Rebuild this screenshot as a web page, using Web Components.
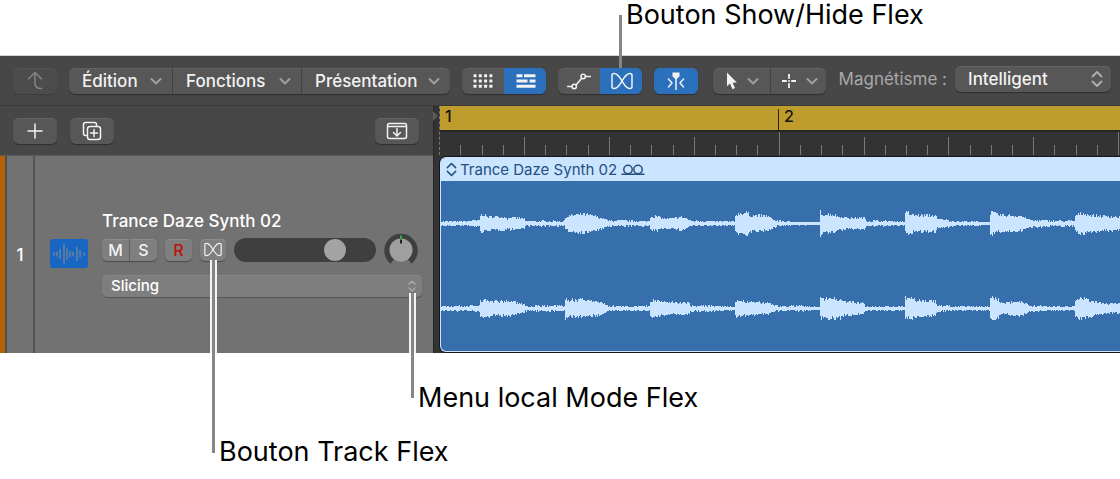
<!DOCTYPE html>
<html lang="fr">
<head>
<meta charset="utf-8">
<title>Boutons Flex</title>
<style>
  body { margin: 0; background: #fff; font-family: Inter, "Liberation Sans", sans-serif; }
</style>
</head>
<body>
<flex-figure></flex-figure>

<script>
const define = (name, html, setup) => customElements.define(name, class extends HTMLElement {
  constructor() {
    super();
    const t = document.createElement('template');
    t.innerHTML = html;
    this.attachShadow({ mode: 'open' }).append(t.content.cloneNode(true));
  }
  connectedCallback() { if (setup) setup(this, this.shadowRoot); }
});

const ICONS = {
  up: [24, 24, '<path d="M5.500 10 L12 3.500 L18.500 10 M12 4 V14.500 Q12 19.500 18.500 19.500"/>'],
  down: [12, 12, '<path d="M1.500 4 L6 8.500 L10.500 4" stroke-width="2"/>'],
  updown: [12, 18, '<path d="M1.500 6.500 L6 2 L10.500 6.500 M1.500 11.500 L6 16 L10.500 11.500" stroke-width="1.800"/>'],
  updownSmall: [8, 12, '<path d="M1 4 L4 1.200 L7 4 M1 8 L4 10.800 L7 8" stroke-width="1.400"/>'],
  plus: [16, 16, '<path d="M8 1 V15 M1 8 H15"/>'],
  copy: [20, 20, '<path d="M4.500 14.500 H3.500 Q1.500 14.500 1.500 12.500 V3.500 Q1.500 1.500 3.500 1.500 H12.500 Q14.500 1.500 14.500 3.500 V4.500"/><rect x="5.500" y="5.500" width="13" height="13" rx="2.500"/><path d="M12 8.500 V15.500 M8.500 12 H15.500"/>'],
  tray: [22, 18, '<rect x="1.500" y="1.500" width="19" height="15" rx="2"/><path d="M2 4.500 H20 M11 6.500 V13.500 M7.500 10.500 L11 14 L14.500 10.500"/>'],
  dots: [20, 14, [0,1,2].map(r => [0,1,2,3].map(c => `<rect x="${c*5.300+.5}" y="${r*5.300+.2}" width="3" height="3" rx=".4" fill="currentColor" stroke="none"/>`).join('')).join('')],
  regions: [20, 14, '<path d="M.500 1.700 H6.500 M8 1.700 H19.500 M.500 7 H11.500 M13.500 7 H19.500 M.500 12.300 H19.500" stroke-width="3" stroke-linecap="butt"/>'],
  curve: [24, 18, '<path d="M.500 14.500 H5 M9.300 12.800 L14.700 6.200 M18.500 4.500 H23.500"/><circle cx="7.200" cy="14.500" r="2.200"/><circle cx="16.200" cy="4.500" r="2.200"/>'],
  flex: [22, 18, '<path d="M1 3.500 Q1 1.500 3 1.500 C7 1.500 9 6 11 9 S15 16.500 19 16.500 Q21 16.500 21 14.500 V3.500 Q21 1.500 19 1.500 C15 1.500 13 6 11 9 S7 16.500 3 16.500 Q1 16.500 1 14.500 Z"/>'],
  catch: [18, 18, '<path d="M5.500 .5 H12.500 V4.500 L9 7.500 L5.500 4.500 Z" fill="currentColor" stroke="none"/><path d="M9 6 V17.500 M1.500 7 L5 11 L1.500 15 M16.500 7 L13 11 L16.500 15"/>'],
  arrow: [12, 18, '<path d="M1 .5 V14.200 L4 11.500 L6.500 17.200 L9 16 L6.600 10.700 L10.800 10.400 Z" fill="currentColor" stroke="none"/>'],
  cross: [16, 16, '<path d="M8 1 V5.800 M8 10.200 V15 M1 8 H5.800 M10.200 8 H15" stroke-width="1.800" stroke-linecap="butt"/><circle cx="8" cy="8" r="1" fill="currentColor" stroke="none"/>'],
  wave: [32, 22, '<path d="M1 10 v2 M4 9 v4 M7 6.500 v9 M11 1.500 v19 M14 6 v10 M17 8.500 v5 M20 9.500 v3 M24 4.500 v13 M27 8 v6 M31 10 v2" stroke-width="1.400"/>'],
  handle: [12, 16, '<path d="M1.500 6 L6 1.500 L10.500 6 M1.500 10 L6 14.500 L10.500 10" stroke-width="1.700"/>'],
  loop: [24, 12, '<circle cx="7" cy="5.500" r="4.200"/><circle cx="17" cy="5.500" r="4.200"/><path d="M1 10.300 H23"/>']
};
define('ui-icon', `<style>
  :host { display: block; flex: none; line-height: 0; }
  svg { display: block; fill: none; stroke: currentColor; stroke-width: 1.5; stroke-linecap: round; stroke-linejoin: round; }
</style><svg aria-hidden="true"></svg>`, (el, root) => {
  const [w, h, body] = ICONS[el.getAttribute('name')];
  const width = +(el.getAttribute('width') || w);
  const svg = root.querySelector('svg');
  svg.setAttribute('viewBox', `0 0 ${w} ${h}`);
  svg.setAttribute('width', width);
  svg.setAttribute('height', Math.round(h * width / w));
  svg.innerHTML = body;
});

/* Rounded frame that joins its buttons into one segmented control. */
define('button-group', `<style>
  :host { display: flex; flex: none; height: 26px; border-radius: 6px; overflow: hidden; background: #575757;
    box-shadow: 0 1px 1px #2e2e2e, inset 0 1px #636363; }
  :host([quiet]) { background: #4c4c4c; box-shadow: 0 1px 1px #3c3c3c, inset 0 1px #525252; }
  :host([track]) { height: 22px; background: #7f7f7f; border-radius: 5px; box-shadow: 0 1px 1px #4c4c4c, inset 0 1px #8c8c8c; }
  ::slotted(:not(:first-child)) { border-left: 1px solid #414141; }
  :host([track]) ::slotted(:not(:first-child)) { border-color: #616161; }
</style><slot></slot>`);

define('tool-button', `<style>
  :host { display: flex; box-sizing: border-box; width: var(--w, 44px); }
  button { display: flex; flex: 1; align-items: center; justify-content: center; gap: 8px; padding: 0; border: 0;
    background: none; color: #f2f2f2; font: 500 17px Inter, "Liberation Sans", sans-serif; }
  :host([active]) { border-color: #2a70bd !important; }
  :host([active]) button { background: #2a70bd; }
  :host([menu]) button { justify-content: space-between; padding: 0 10px 0 13px; }
  :host([tool]) button { gap: 9px; padding-left: 2px; }
  :host([dim]) button { color: #858585; }
  :host([rec]) button { color: #b81408; }
  :host([track]) button { font-size: 16px; }
  .chevron { color: #a0a0a0; }
</style><button type="button"><slot></slot></button>`, (el, root) => {
  const b = root.querySelector('button');
  if (el.hasAttribute('label')) b.setAttribute('aria-label', el.getAttribute('label'));
  if (el.hasAttribute('active')) b.setAttribute('aria-pressed', 'true');
  if ((el.hasAttribute('menu') || el.hasAttribute('tool')) && !root.querySelector('.chevron'))
    b.insertAdjacentHTML('beforeend', '<ui-icon class="chevron" name="down"></ui-icon>');
});

define('snap-select', `<style>
  :host { display: flex; align-items: center; gap: 8px; color: #a9a9a9; font-size: 17px; white-space: nowrap; }
  span { position: relative; display: block; }
  select { appearance: none; display: block; width: 156px; height: 26px; margin: 0; padding: 0 30px 0 13px; border: 0; border-radius: 6px;
    background: #575757; color: #f2f2f2; font: 500 17px Inter, "Liberation Sans", sans-serif; box-shadow: 0 1px 1px #2e2e2e, inset 0 1px #636363; }
  ui-icon { position: absolute; right: 8px; top: 4px; color: #b0b0b0; pointer-events: none; }
</style><label for="snap">Magnétisme :</label><span><select id="snap"><option>Intelligent</option></select><ui-icon name="updown"></ui-icon></span>`);

define('tool-bar', `<style>
  :host { display: flex; align-items: center; gap: 12px; height: 49px; padding: 0 9px 0 13px; background: #474747; border-bottom: 1px solid #3a3a3a; }
  .tools { margin-left: 3px; }
  snap-select { margin: 0 0 3px auto; }
</style>
<button-group quiet><tool-button dim label="Monter"><ui-icon name="up"></ui-icon></tool-button></button-group>
<button-group>
  <tool-button menu style="--w:103px">Édition</tool-button>
  <tool-button menu style="--w:129px">Fonctions</tool-button>
  <tool-button menu style="--w:149px">Présentation</tool-button>
</button-group>
<button-group>
  <tool-button style="--w:42px" label="Grille"><ui-icon name="dots"></ui-icon></tool-button>
  <tool-button style="--w:42px" active label="Pistes"><ui-icon name="regions"></ui-icon></tool-button>
</button-group>
<button-group>
  <tool-button style="--w:42px" label="Automation"><ui-icon name="curve"></ui-icon></tool-button>
  <tool-button style="--w:42px" active label="Show/Hide Flex"><ui-icon name="flex"></ui-icon></tool-button>
</button-group>
<button-group><tool-button active label="Suivre la lecture"><ui-icon name="catch"></ui-icon></tool-button></button-group>
<button-group class="tools">
  <tool-button tool style="--w:57px" label="Pointeur"><ui-icon name="arrow"></ui-icon></tool-button>
  <tool-button tool style="--w:56px" label="Croix"><ui-icon name="cross"></ui-icon></tool-button>
</button-group>
<snap-select></snap-select>`);

define('track-actions', `<style>
  :host { display: flex; box-sizing: border-box; align-items: center; gap: 13px; height: 49px; padding: 0 14px 0 13px; background: #474747; }
  .end { margin-left: auto; }
</style>
<button-group><tool-button label="Ajouter une piste"><ui-icon name="plus"></ui-icon></tool-button></button-group>
<button-group><tool-button label="Dupliquer la piste"><ui-icon name="copy"></ui-icon></tool-button></button-group>
<button-group class="end"><tool-button label="Afficher la zone"><ui-icon name="tray"></ui-icon></tool-button></button-group>`);

define('volume-slider', `<style>
  :host { display: block; flex: 1; min-width: 0; }
  input { appearance: none; display: block; width: 100%; height: 24px; margin: 0; border-radius: 12px; background: #3f3f3f; }
  input::-webkit-slider-thumb { appearance: none; width: 22px; height: 22px; border-radius: 50%; background: #a3a3a3; }
</style><input type="range" min="0" max="100" value="75" aria-label="Volume">`);

define('pan-knob', `<style>:host { display: block; flex: none; } svg { display: block; }</style>
<svg width="34" height="34" viewBox="0 0 34 34" role="img" aria-label="Balance">
  <path d="M8.300 28.500 A14 14 0 1 1 25.700 28.500" fill="none" stroke="#3f3f3f" stroke-width="5.500"/>
  <circle cx="17" cy="17" r="11.500" fill="#9f9f9f"/>
  <path d="M17 2.500 V6" stroke="#35b045" stroke-width="2"/><path d="M17 6.500 V10.500" stroke="#222" stroke-width="2"/>
</svg>`);

define('mode-select', `<style>
  :host { display: block; position: relative; }
  select { appearance: none; display: block; width: 100%; height: 22px; margin: 0; padding: 0 20px 0 9px; border: 0; border-radius: 5px;
    background: #7e7e7e; color: #fff; font: 500 15px Inter, "Liberation Sans", sans-serif; box-shadow: 0 1px 1px #565656, inset 0 1px #868686; }
  ui-icon { position: absolute; right: 6px; top: 5px; color: #a9a9a9; pointer-events: none; }
</style><select aria-label="Mode Flex"><option>Slicing</option></select><ui-icon name="updownSmall"></ui-icon>`);

define('track-header', `<style>
  :host { display: flex; box-sizing: border-box; height: 198px; background: #727272; border-top: 1px solid #5c5c5c; color: #fff; }
  .colour { width: 5px; background: #b65f04; border-right: 2px solid #4d4d4d; }
  .number { display: flex; align-items: center; justify-content: center; width: 26px; font-size: 17px; font-weight: 500; border-right: 2px solid #545454; }
  .body { display: flex; flex: 1; min-width: 0; align-items: center; gap: 14px; padding: 0 11px 2px 15px; }
  .icon { display: flex; align-items: center; justify-content: center; flex: none; width: 38px; height: 29px; border-radius: 3px; background: #1766c1; color: #71859b; }
  .controls { flex: 1; min-width: 0; }
  .name { font-size: 17px; line-height: 20px; font-weight: 500; margin-bottom: 2px; }
  .row { display: flex; align-items: center; gap: 8px; height: 34px; margin: 0 4px 8px 0; }
</style>
<div class="colour"></div>
<div class="number">1</div>
<div class="body">
  <div class="icon"><ui-icon name="wave"></ui-icon></div>
  <div class="controls">
    <div class="name">Trance Daze Synth 02</div>
    <div class="row">
      <button-group track><tool-button track style="--w:27px">M</tool-button><tool-button track style="--w:28px">S</tool-button></button-group>
      <button-group track><tool-button track rec style="--w:27px">R</tool-button></button-group>
      <button-group track><tool-button track style="--w:26px" label="Track Flex"><ui-icon name="flex" width="18"></ui-icon></tool-button></button-group>
      <volume-slider></volume-slider>
      <pan-knob></pan-knob>
    </div>
    <mode-select></mode-select>
  </div>
</div>`);

/* Bar ruler: 16 divisions per bar, a taller tick on each beat. */
define('bar-ruler', `<style>
  :host { display: block; position: relative; height: 49px; background: #333; overflow: hidden; border-left: 1px dashed #777; }
  .cycle { display: flex; height: 24px; background: #bf9c2e; border-bottom: 2px solid #262626; font-size: 16px; line-height: 21px; font-weight: 500; color: #16140a; }
  .cycle span { box-sizing: border-box; flex: none; width: 339px; padding-left: 5px; }
  svg { position: absolute; left: 0; top: 0; width: 100%; height: 49px; }
</style><div class="cycle"><span>1</span><span>2</span></div><svg aria-hidden="true"></svg>`, (el, root) => {
  let s = '<rect x="338" y="3" width="1" height="21" fill="#2c2508"/>';
  for (let i = 1; i < 120; i++) {
    const top = i % 16 === 0 ? 26 : i % 4 === 0 ? 31 : 39;
    s += `<rect x="${Math.floor(i * 21.22 - .4)}" y="${top}" width="1" height="${49 - top}" fill="#7b7b7b"/>`;
  }
  root.querySelector('svg').innerHTML = s;
});

/* Stereo waveform: for each hit, [offset, amplitude] points of its envelope. */
const HITS = [
  [],
  [[[0,8],[3,9],[8,6.500],[26,6.500],[27,4],[30,6],[44,4.500],[45,2],[60,2.200],[84,2]],
   [[0,8],[5,8.500],[12,7],[30,7],[44,4],[46,2.200],[60,2.500],[84,2.200]]],
  [[[0,6],[4,7.500],[18,9.500],[30,7],[39,4.500],[43,2.600],[55,2.500],[84,2]],
   [[0,10],[3,8.500],[20,8.500],[35,6.500],[40,4],[43,2.200],[60,1.600],[84,2.200]]],
  [[[0,7],[8,7],[12,4.500],[22,4.500],[30,6.500],[36,5],[40,2.200],[50,2.200],[84,1.500]],
   [[0,8],[8,7.500],[14,6],[36,5.500],[39,5],[40,2.500],[60,2.500],[84,1.200]]],
  [[[0,9],[4,10],[13,11],[14,8],[32,7.500],[40,3],[45,2.200],[52,1.500],[84,1]],
   [[0,8],[5,7.500],[15,6],[35,5.500],[36,3.500],[50,1.700],[65,2.400],[84,1.200]]],
  [[[0,12],[3,9],[12,9],[20,6.500],[32,5],[45,5.500],[46,2.300],[55,2.300],[84,1.500]],
   [[0,9.500],[20,10],[23,7.500],[44,5],[45,1.700],[84,1.400]]],
  [[[0,8],[2,12],[5,9.500],[8,8.500],[31,8],[32,4],[46,3],[47,2],[84,1.200]],
   [[0,10.500],[8,9.500],[13,8],[31,7],[32,3],[45,2.200],[50,1.600],[84,1.600]]],
  [[[0,10],[2,11],[6,10],[8,8.500],[31,7.500],[38,4.500],[41,3],[60,2.600],[84,2.300]],
   [[0,9],[1,11.500],[8,9],[13,5],[22,6],[30,7.500],[37,4.500],[40,2.500],[50,2.500],[58,1.600],[84,1.800]]],
  [[[0,7],[4,9.500],[10,10.500],[16,8],[45,6.500],[84,2]],
   [[0,7.500],[6,11],[12,9],[24,6],[30,4.500],[50,4.500],[84,2]]]
];
define('wave-form', `<style>:host { display: block; overflow: hidden; } svg { display: block; width: 100%; height: 170px; }</style>
<svg role="img" aria-label="Forme d’onde stéréo"></svg>`, (el, root) => {
  let seed = 7;
  const rnd = () => (seed = (seed * 16807) % 2147483647) / 2147483647;
  const amp = (pts, t) => {
    for (let i = 1; i < pts.length; i++) if (t < pts[i][0]) {
      const [a, b] = [pts[i - 1], pts[i]];
      return a[1] + (b[1] - a[1]) * (t - a[0]) / (b[0] - a[0]);
    }
    return pts[pts.length - 1][1];
  };
  const start = 39, period = 84.9;
  let d = '';
  [42.5, 127.5].forEach((cy, ch) => {
    for (let x = 0; x < 2400; x++) {
      const n = Math.floor((x - start) / period) + 1;
      const t = x - start - (n - 1) * period;
      const a = n < 1 ? (x > 27 ? 2.8 : 2) : amp(HITS[n < HITS.length ? n : 1 + n % 8][ch], t);
      const j = a < 3.2 ? 0.4 : 0.72, k = a < 3.2 ? 0.9 : 0.42;
      const u = Math.max(1, Math.round(a * (j + rnd() * k))), l = Math.max(1, Math.round(a * (j + rnd() * k)));
      d += `M${x} ${cy - u - .5}h1v${u + l + 1}h-1z`;
    }
  });
  root.querySelector('svg').innerHTML = `<path d="${d}" fill="#cbe4ff"/>`;
});

define('audio-region', `<style>
  :host { display: block; box-sizing: border-box; height: 195px; border: 1px solid #cbe4ff; border-width: 1px 0 1px 1px; border-radius: 6px 0 0 6px; background: #366fab; overflow: hidden; box-shadow: 0 0 0 1px #15171a; }
  header { display: flex; align-items: center; height: 23px; padding-left: 5px; background: #cbe4ff; color: #23507f; font-size: 15px; }
  .name { margin: 0 4px 0 3px; }
</style><header><ui-icon name="handle" width="11"></ui-icon><span class="name"><slot></slot></span><ui-icon name="loop"></ui-icon></header><wave-form></wave-form>`);

define('arrange-window', `<style>
  :host { display: block; }
  .main { display: grid; grid-template-columns: 433px 6px minmax(0, 1fr); overflow: hidden; }
  .divider { background: linear-gradient(90deg, #262626 1px, #333 1px); }
  .divider i { display: block; width: 0; margin-top: 5px; border: 5px solid transparent; border-left-color: #5a5a5a; border-right: 0; }
  .lane { background: #333; min-width: 0; }
  audio-region { margin: 2px 0 1px 1px; }
</style>
<tool-bar></tool-bar>
<div class="main">
  <div><track-actions></track-actions><track-header></track-header></div>
  <div class="divider"><i></i></div>
  <div class="lane"><bar-ruler></bar-ruler><audio-region>Trance Daze Synth 02</audio-region></div>
</div>`);

/* Leader line between a caption and the control that it names. */
define('leader-line', `<style>
  :host { position: absolute; width: 3px; background: #868686; }
  i { display: block; width: 3px; border: solid #f4f4f4; border-width: 0 2px; margin-left: -2px; }
</style><i></i>`, (el, root) => {
  root.querySelector('i').style.height = (el.getAttribute('halo') || 0) + 'px';
});

define('flex-figure', `<style>
  :host { display: block; position: relative; color: #000; font-size: 27px; line-height: 32px; }
  .top { height: 55px; padding-left: 626px; border-bottom: 1px solid #d5d5d5; line-height: 30px; }
  .menu { padding: 29px 0 0 418px; }
  .track { padding: 22px 0 10px 219px; }
  .a { left: 619px; top: 15px; height: 53px; }
  .b { left: 212px; top: 260px; height: 193px; }
  .c { left: 411px; top: 293px; height: 105px; }
  div { white-space: nowrap; }
</style>
<div class="top">Bouton Show/Hide Flex</div>
<arrange-window></arrange-window>
<div class="menu">Menu local Mode Flex</div>
<div class="track">Bouton Track Flex</div>
<leader-line class="a"></leader-line>
<leader-line class="b" halo="93"></leader-line>
<leader-line class="c" halo="60"></leader-line>`);
</script>
</body>
</html>
